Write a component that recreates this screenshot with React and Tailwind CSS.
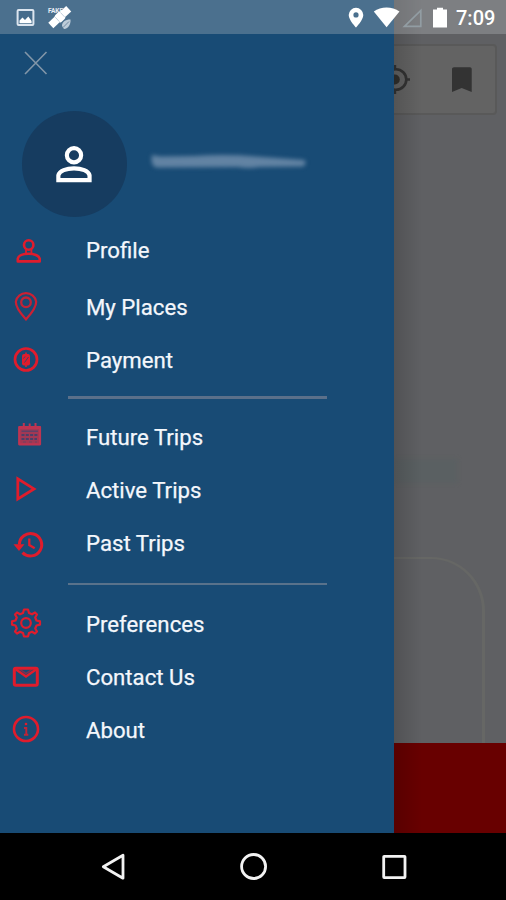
import React from "react";

const red = "#e01c2c";

function RowIcon({ children }) {
  return (
    <svg className="h-[53px] w-[86px] shrink-0" viewBox="0 0 86 53" fill="none" stroke={red} strokeWidth="2.6">
      {children}
    </svg>
  );
}

const ProfileIcon = () => (
  <RowIcon>
    <circle cx="28.7" cy="21" r="4.7" />
    <path d="M26 25.5V29.5M31.4 25.500V29.5" strokeWidth="1.8" />
    <path d="M17.8 37.4V34.5C18.5 31.5 23.5 29.8 28.7 29.8S39 31.5 39.7 34.5V37.4Z" strokeLinejoin="round" />
  </RowIcon>
);
const PinIcon = () => (
  <RowIcon>
    <path d="M26 38.4C22 34 15.8 27.5 15.8 20.8A10.3 10 0 0 1 36.2 20.8C36.2 27.5 30 34 26 38.4Z" strokeWidth="2.2" opacity=".9" />
    <circle cx="26" cy="21.3" r="4.8" strokeWidth="2.3" opacity=".85" />
  </RowIcon>
);
const PaymentIcon = () => (
  <RowIcon>
    <circle cx="26" cy="25.5" r="11" strokeWidth="2.7" />
    <rect x="22" y="20" width="8" height="11.5" rx="2" fill={red} stroke="none" />
    <path d="M26 18.5V33" strokeWidth="1.6" />
    <path d="M24.5 28.5L28.5 23M23.5 24.5L25 22.5" stroke="#184b75" strokeWidth=".8" />
  </RowIcon>
);
const CalendarIcon = () => (
  <RowIcon>
    <g stroke="#bd3451">
      <path d="M19.200 16H40V33.300H19.200Z" strokeWidth="2.200" fill="#a23854" strokeLinejoin="round" />
      <path d="M19 16.5H40.500" strokeWidth="3" />
      <path d="M23.8 12V18M29.7 12.5V17M35.5 12V18" strokeWidth="2" />
    </g>
    <path d="M21.5 20.2H38" stroke="#58436a" strokeWidth="1.4" />
    <path d="M21.5 24H38M21.5 28H37" stroke="#4a4069" strokeWidth="1.8" strokeDasharray="3 1.3" />
    <path d="M23 31H37" stroke="#70405f" strokeWidth="1.2" strokeDasharray="3 3" />
  </RowIcon>
);
const PlayIcon = () => (
  <RowIcon>
    <path d="M17.8 14.8V35L34 24.9Z" strokeWidth="2.8" />
  </RowIcon>
);
const HistoryIcon = () => (
  <RowIcon>
    <path d="M19.3 27.500A11.2 11.2 0 1 1 22.5 35.6" strokeWidth="3" />
    <path d="M13.5 27.3H24.5L19 34Z" fill={red} stroke="none" />
    <path d="M29.3 21.5V28L34.7 31.3" strokeWidth="2.3" />
  </RowIcon>
);
const GearIcon = () => (
  <RowIcon>
    <path
      d="M24 11.5H28L29 15L32 16.3L35 14.5L37 16.5L35.2 19.5L36.5 22.5L40 23.4V26.6L36.5 27.5L35.2 30.5L37 33.5L35 35.5L32 33.7L29 35L28 38.5H24L23 35L20 33.7L17 35.5L15 33.5L16.8 30.5L15.5 27.5L12 26.6V23.4L15.5 22.5L16.8 19.5L15 16.5L17 14.5L20 16.3L23 15Z"
      strokeWidth="2.2"
      strokeLinejoin="round"
    />
    <circle cx="26" cy="25" r="4.8" strokeWidth="2.2" />
  </RowIcon>
);
const MailIcon = () => (
  <RowIcon>
    <rect x="14.3" y="17.2" width="23" height="17" rx="1.5" strokeWidth="3" />
    <path d="M16 18.5L26 25.500L36 18.5" strokeWidth="2.4" />
    <path d="M20 18.3L26 22.5L32 18.3" strokeWidth="1.5" opacity=".5" />
  </RowIcon>
);
const InfoIcon = () => (
  <RowIcon>
    <circle cx="26" cy="25" r="12" strokeWidth="2.6" />
    <circle cx="26" cy="20" r="1.3" fill={red} stroke="none" />
    <path d="M24 24H26.3V30.8M24 30.8H28.3" strokeWidth="1.9" opacity=".85" />
  </RowIcon>
);

function Item({ icon: Icon, label }) {
  return (
    <li className="flex h-[53px] items-center">
      <Icon />
      <span className="text-[22.2px] leading-none whitespace-nowrap text-[#f4f7fc] [-webkit-text-stroke:0.25px_#f4f7fc]">{label}</span>
    </li>
  );
}

function StatusBar() {
  return (
    <header className="absolute inset-x-0 top-0 flex h-[34px] items-center bg-[#c3c8c9]/30">
      <svg className="h-[34px] w-[90px]" viewBox="0 0 90 34">
        <rect x="17.6" y="10" width="15.8" height="15" rx="1" fill="#466c8c" stroke="#dce5ef" strokeWidth="2" />
        <path d="M19.5 23.2V20.5L22.5 17.5L25 20L28.3 16.5L31.6 21V23.2Z" fill="#fff" />
        <text x="48" y="12.5" fontSize="6.5" fontWeight="700" fill="#e7eef5">FAKE</text>
        <g transform="rotate(-43 60 17)">
          <rect x="47.500" y="13.2" width="9" height="7.4" fill="#fff" />
          <rect x="63" y="13.2" width="9" height="7.4" fill="#fff" />
          <rect x="56" y="12.3" width="8" height="9.4" rx="2" fill="#fff" />
          <path d="M56.4 14V20M63.4 14V20" stroke="#b7c8d7" strokeWidth=".8" />
        </g>
        <path d="M62 26C62 22 65 19.5 70.5 19.5C71 24 68.5 28.5 64 29Z" fill="#bdccd9" />
        <path d="M63 27.5L69 21.5" stroke="#718ba3" strokeWidth="1" />
      </svg>
      <svg className="ml-auto h-[34px] w-[110px]" viewBox="340 0 110 34">
        <path fillRule="evenodd" d="M356 7.8A7.3 7.3 0 0 0 348.7 15C348.7 20 356 27.5 356 27.5S363.3 20 363.3 15A7.3 7.3 0 0 0 356 7.8ZM356 12.3A2.6 2.6 0 1 1 356 17.5A2.6 2.6 0 0 1 356 12.3Z" fill="#fff" />
        <path d="M373.800 11.5C381 6.3 392 6.3 399.5 11.5L386.6 27.2Z" fill="#fff" />
        <path d="M404.5 26.3L420.8 10.5V26.3Z" fill="none" stroke="#929da3" strokeWidth="1.7" />
        <path d="M433 9.5H437V7.8H443V9.5H447V27.5H433Z" fill="#fff" />
      </svg>
      <span className="w-[56px] pt-[2px] pl-[6px] text-[20px] leading-none font-medium text-white">7:09</span>
    </header>
  );
}

function Drawer() {
  return (
    <aside className="w-[394px] shrink-0 bg-[#184b75] pt-[51px]">
      <button className="ml-[24px] block h-6 w-6" aria-label="Close">
        <svg className="h-6 w-6" viewBox="0 0 24 24" stroke="#8296a8" strokeWidth="1.6">
          <path d="M1 1L22.5 23M22.5 1L1 23" />
        </svg>
      </button>
      <div className="mt-[36px] ml-[22px] flex items-center">
        <div className="flex h-[106px] w-[105px] items-center justify-center rounded-full bg-[#163c60]">
          <svg className="h-[106px] w-[106px]" viewBox="0 0 106 106" fill="none" stroke="#fff" strokeWidth="4.200">
            <circle cx="52.5" cy="44.2" r="7.200" />
            <path d="M36.7 69.2V64.500C37.5 59.8 45 57.4 52.5 57.4S67.5 59.8 68.2 64.500V69.2Z" />
          </svg>
        </div>
        <div className="mt-[-5px] ml-[17px] h-[28px] w-[172px] blur-[2px]">
          <svg className="h-[28px] w-[172px]" viewBox="0 0 172 28">
            <path d="M8 7Q12 7.500 16 8.500L50 8Q82 6 112 8.500L160 12Q164 15 159 18.500L115 19Q105 21 94 19L12 19.500Q6 17 8 7Z" fill="#6283a3" />
          </svg>
        </div>
      </div>
      <ul className="mt-[7px]">
        <Item icon={ProfileIcon} label="Profile" />
        <li className="h-1" />
        <Item icon={PinIcon} label="My Places" />
        <Item icon={PaymentIcon} label="Payment" />
      </ul>
      <hr className="mt-[9px] ml-[68px] h-[3px] w-[259px] border-0 bg-[#5b708a]" />
      <ul className="mt-[12px]">
        <Item icon={CalendarIcon} label="Future Trips" />
        <Item icon={PlayIcon} label="Active Trips" />
        <Item icon={HistoryIcon} label="Past Trips" />
      </ul>
      <hr className="mt-[13px] ml-[68px] h-[2px] w-[259px] border-0 bg-[#59728b]" />
      <ul className="mt-[13px]">
        <Item icon={GearIcon} label="Preferences" />
        <Item icon={MailIcon} label="Contact Us" />
        <Item icon={InfoIcon} label="About" />
      </ul>
    </aside>
  );
}

function DimmedPage() {
  return (
    <main className="relative flex min-w-0 flex-1 flex-col overflow-hidden bg-[#5f6063]">
      <div className="mt-[44px] mr-[9px] flex h-[71px] items-center rounded-r-[4px] border-y-2 border-r-2 border-[#595959] bg-[#636363]">
        <svg className="h-[40px] w-[100px] shrink-0" viewBox="394 60 100 40">
          <circle cx="396" cy="79.5" r="10.3" fill="none" stroke="#333" strokeWidth="2.6" />
          <circle cx="394.800" cy="79.5" r="5" fill="#302f2c" />
          <path d="M406 79.5H410M395 65V70M395 89V94" stroke="#333" strokeWidth="2.4" />
          <path d="M454 67.2H470C471 67.2 471.7 68 471.7 69V92L461.7 88L452 92V69C452 68 453 67.2 454 67.2Z" fill="#333" />
        </svg>
      </div>
      <div className="mt-[344px] h-[24px] w-[63px] bg-[#5a6062] blur-[2px]" />
      <div className="mt-[74px] mr-[21px] flex-1 rounded-tr-[54px] border-t-2 border-r-[3px] border-[#666765]" />
      <div className="h-[90px] bg-[#680000]" />
      <div className="absolute inset-y-0 left-0 w-[28px] bg-linear-to-r from-black/15 to-transparent" />
    </main>
  );
}

function NavBar() {
  return (
    <nav className="flex h-[67px] bg-black">
      <svg className="h-[67px] w-[506px]" viewBox="0 833 506 67" fill="none" stroke="#f3f3f3" strokeWidth="2.8">
        <path d="M123 855.3V878.2L103.3 866.7Z" strokeLinejoin="round" />
        <circle cx="253.6" cy="866.5" r="12" />
        <rect x="383.7" y="856.3" width="21.3" height="21.3" rx=".5" />
      </svg>
    </nav>
  );
}

export default function App() {
  return (
    <div className="relative flex h-[900px] w-[506px] flex-col overflow-hidden bg-black font-['Roboto',sans-serif]">
      <div className="flex h-[833px]">
        <Drawer />
        <DimmedPage />
      </div>
      <NavBar />
      <StatusBar />
    </div>
  );
}
